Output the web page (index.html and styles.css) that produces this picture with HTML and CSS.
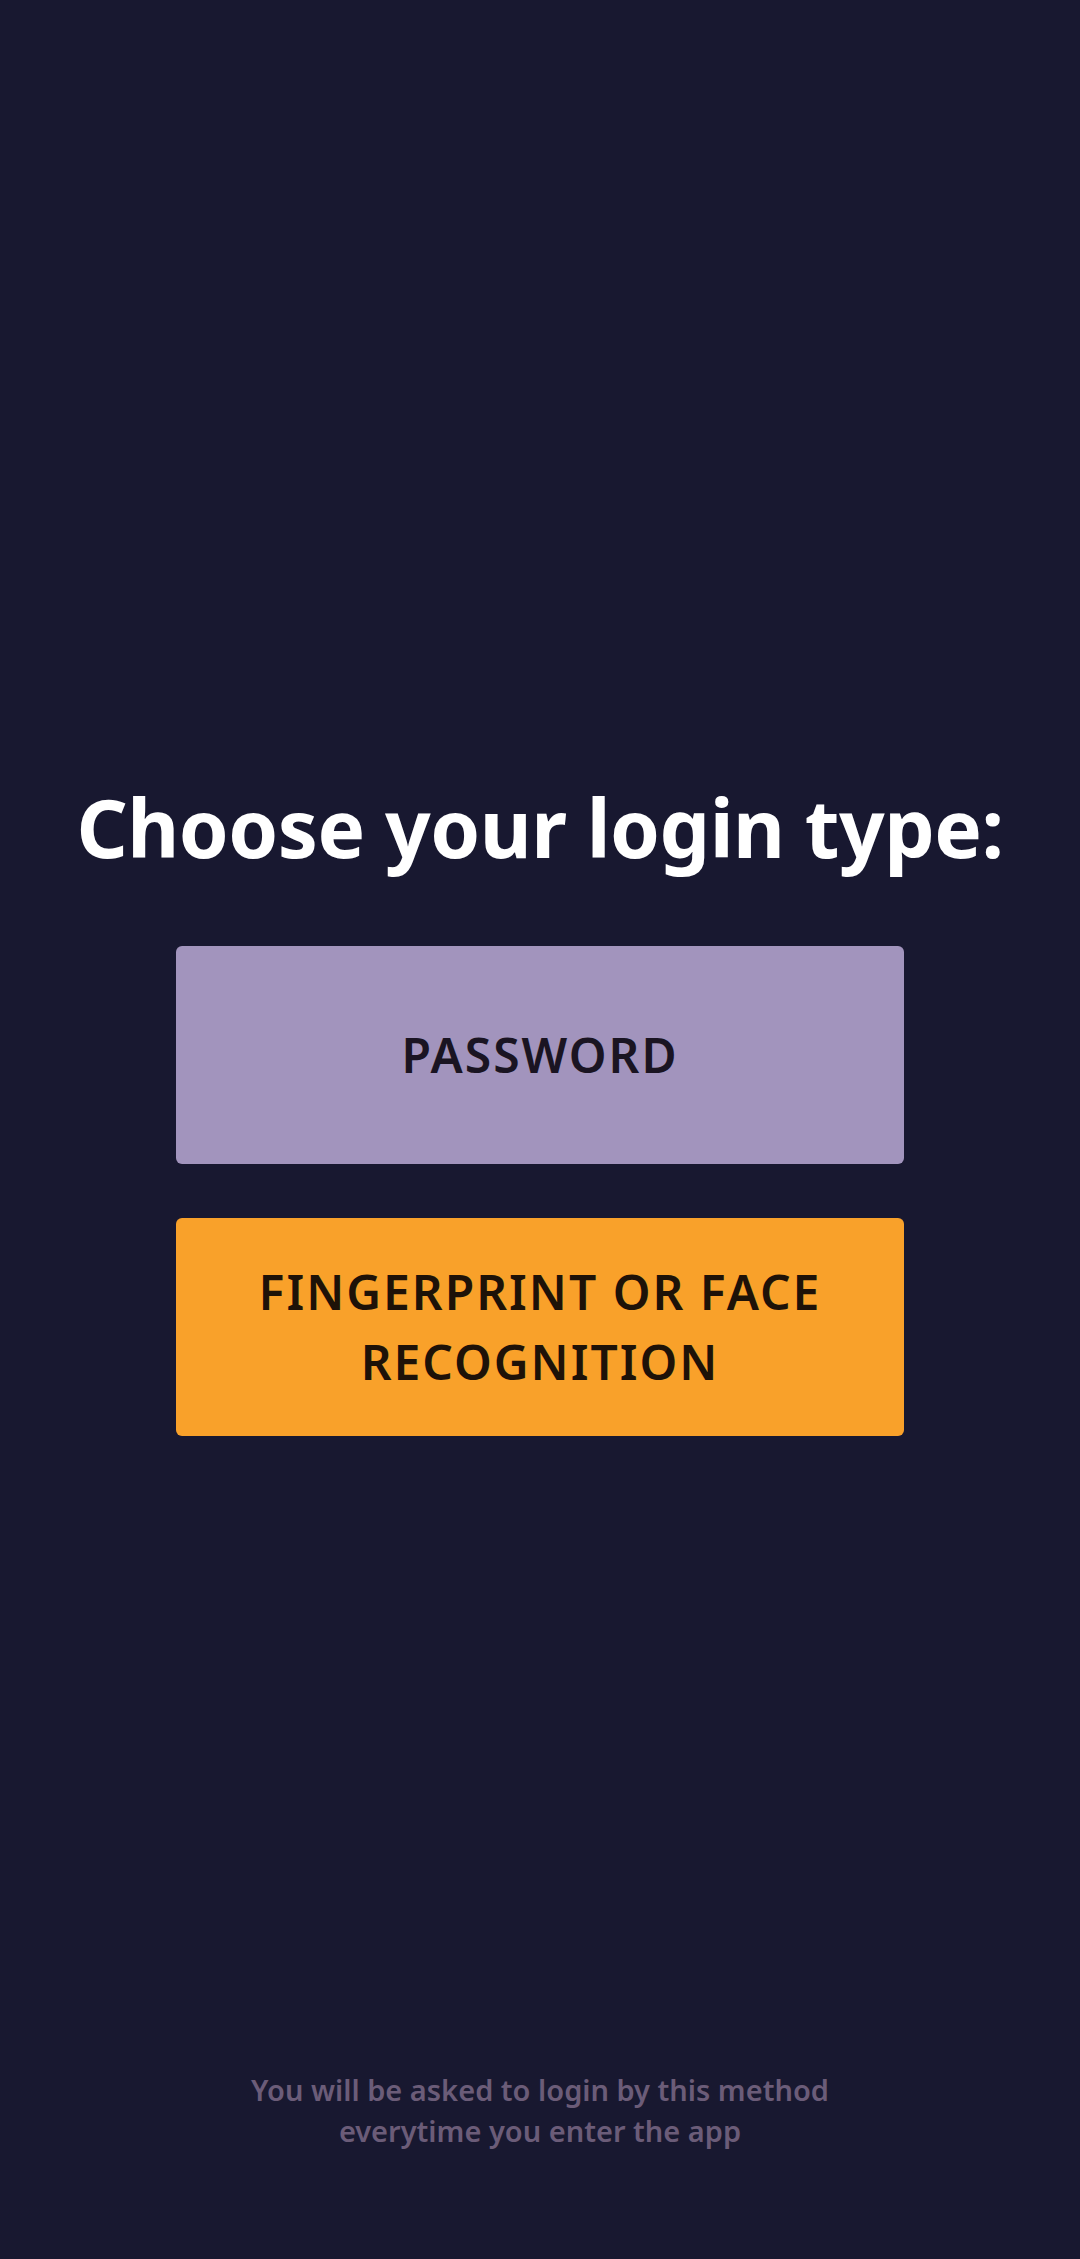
FILE: index.html
```html
<!DOCTYPE html>
<html lang="en">
<head>
<meta charset="utf-8">
<title>Choose login type</title>
<link rel="stylesheet" href="styles.css">
</head>
<body>
<div class="screen">
  <main class="content">
    <h1 class="title">Choose your login type:</h1>
    <div class="options">
      <button class="option option-password">PASSWORD</button>
      <button class="option option-bio">FINGERPRINT OR FACE<br>RECOGNITION</button>
    </div>
  </main>
  <p class="note">You will be asked to login by this method<br>everytime you enter the app</p>
</div>
</body>
</html>
```
FILE: styles.css
```css
html, body {
  margin: 0;
  padding: 0;
  background: #181830;
}
.screen {
  width: 1080px;
  height: 2259px;
  display: flex;
  flex-direction: column;
  align-items: center;
  font-family: "Noto Sans", "Open Sans", sans-serif;
  box-sizing: border-box;
}
.content {
  display: flex;
  flex-direction: column;
  align-items: center;
  padding-top: 772px;
}
.title {
  margin: 0;
  color: #ffffff;
  font-size: 80px;
  font-weight: 700;
  line-height: 110px;
  letter-spacing: -0.5px;
}
.options {
  display: flex;
  flex-direction: column;
  gap: 54px;
  margin-top: 64px;
}
.option {
  width: 728px;
  height: 218px;
  border: none;
  border-radius: 6px;
  font-family: inherit;
  font-size: 48px;
  font-weight: 600;
  line-height: 70px;
  letter-spacing: 2px;
  color: #1a1422;
  text-align: center;
  padding: 0;
}
.option-password {
  background: #a294bd;
}
.option-bio {
  background: #f9a12a;
  color: #1e1208;
}
.note {
  margin: auto 0 0 0;
  padding-bottom: 108px;
  text-align: center;
  color: #6b5c78;
  font-size: 29px;
  font-weight: 600;
  line-height: 41px;
}
```
